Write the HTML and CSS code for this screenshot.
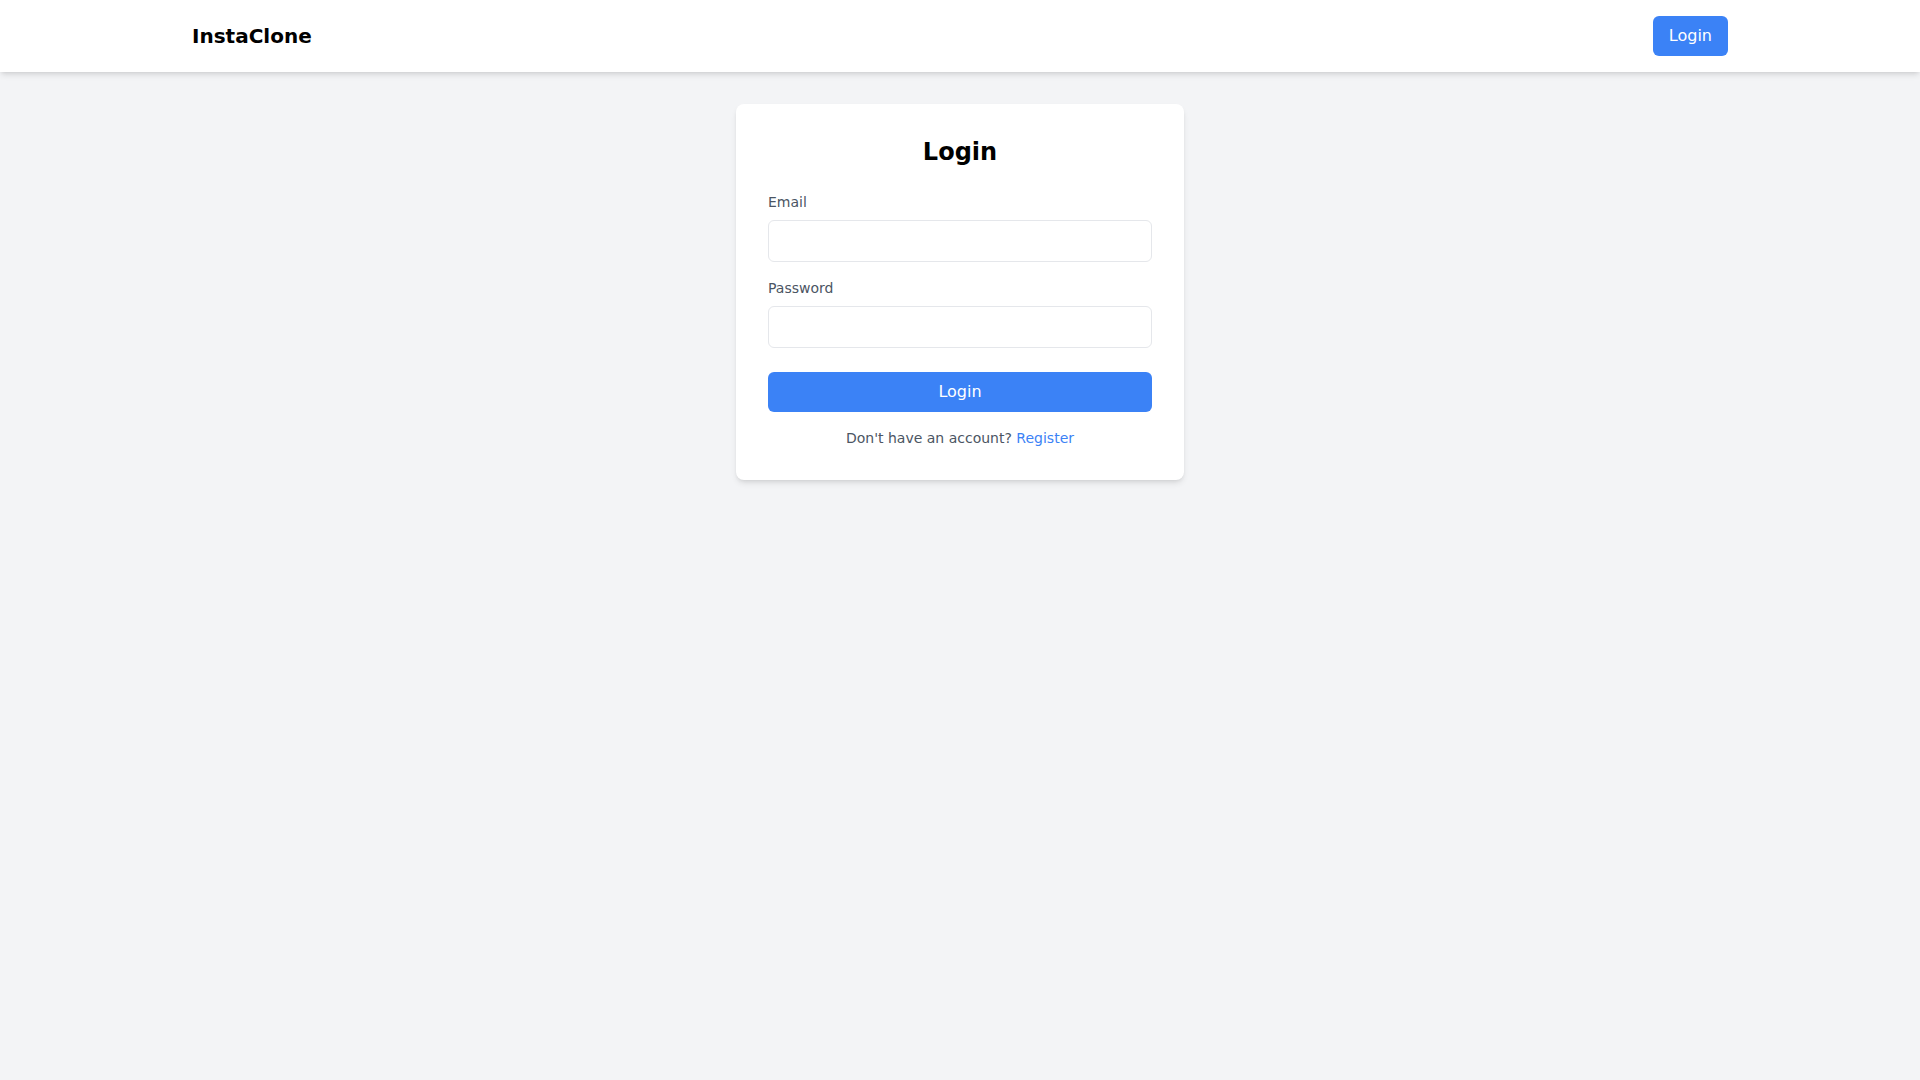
FILE: index.html
```html
<!DOCTYPE html>
<html lang="en">
<head>
<meta charset="utf-8">
<title>InstaClone</title>
<link rel="stylesheet" href="styles.css">
</head>
<body>
<header class="navbar">
  <div class="nav-inner">
    <div class="brand">InstaClone</div>
    <button class="nav-btn">Login</button>
  </div>
</header>
<main class="main">
  <div class="card">
    <h2 class="title">Login</h2>
    <div class="field">
      <label class="label">Email</label>
      <input class="input" type="email">
    </div>
    <div class="field field-last">
      <label class="label">Password</label>
      <input class="input" type="password">
    </div>
    <button class="submit">Login</button>
    <p class="footer-text">Don't have an account? <a class="link" href="#">Register</a></p>
  </div>
</main>
</body>
</html>
```
FILE: styles.css
```css
* { box-sizing: border-box; }
html, body { margin: 0; padding: 0; }
body {
  font-family: "DejaVu Sans", sans-serif;
  background: #f3f4f6;
  color: #000;
  min-height: 100vh;
}
.navbar {
  background: #fff;
  box-shadow: 0 4px 6px -1px rgba(0,0,0,0.1), 0 2px 4px -2px rgba(0,0,0,0.1);
  padding: 16px 0;
}
.nav-inner {
  max-width: 1536px;
  margin: 0 auto;
  display: flex;
  justify-content: space-between;
  align-items: center;
}
.brand {
  font-size: 20px;
  line-height: 28px;
  font-weight: 700;
}
.nav-btn {
  font-family: inherit;
  font-size: 16px;
  line-height: 24px;
  padding: 8px 16px;
  background: #3b82f6;
  color: #fff;
  border: none;
  border-radius: 6px;
}
.main {
  padding-top: 32px;
  display: flex;
  justify-content: center;
}
.card {
  width: 448px;
  background: #fff;
  border-radius: 8px;
  box-shadow: 0 4px 6px -1px rgba(0,0,0,0.1), 0 2px 4px -2px rgba(0,0,0,0.1);
  padding: 32px;
}
.title {
  margin: 0 0 24px;
  text-align: center;
  font-size: 24px;
  line-height: 32px;
  font-weight: 700;
}
.field { margin-bottom: 16px; }
.field-last { margin-bottom: 24px; }
.label {
  display: block;
  font-size: 14px;
  line-height: 20px;
  color: #4b5563;
  margin-bottom: 8px;
}
.input {
  display: block;
  width: 100%;
  height: 42px;
  padding: 8px 12px;
  font-family: inherit;
  font-size: 16px;
  border: 1px solid #e5e7eb;
  border-radius: 6px;
  background: #fff;
}
.submit {
  display: block;
  width: 100%;
  font-family: inherit;
  font-size: 16px;
  line-height: 24px;
  padding: 8px 16px;
  background: #3b82f6;
  color: #fff;
  border: none;
  border-radius: 6px;
}
.footer-text {
  margin: 16px 0 0;
  text-align: center;
  font-size: 14px;
  line-height: 20px;
  color: #4b5563;
}
.link { color: #3b82f6; text-decoration: none; }
```
